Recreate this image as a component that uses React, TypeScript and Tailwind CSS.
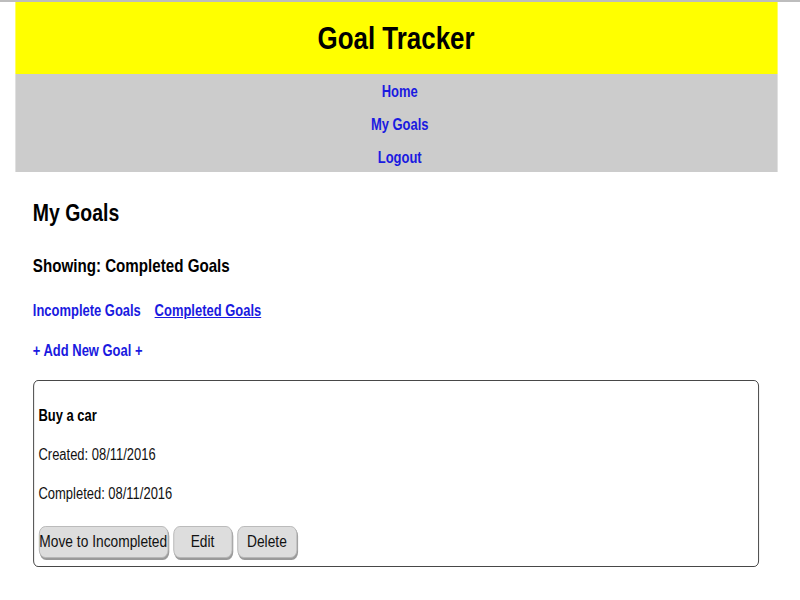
// The reference text is horizontally condensed (Arial squeezed to ~81%).
// No narrow face is installed, so the page is laid out at 988px and squeezed.
export default function App() {
  const font = { fontFamily: '"Liberation Sans", Arial, sans-serif' };
  const btn =
    "h-[32px] rounded-[8px] bg-[#dddddd] border border-[#b5b5b5] shadow-[1px_2px_0_#9a9a9a] text-[17px] text-[#111] whitespace-nowrap flex items-center justify-center";
  const link = "text-[16px] font-bold text-[#1a1ae0]";

  return (
    <div className="min-h-screen w-full overflow-hidden bg-white border-t-2 border-[#bdbdbd]" style={font}>
      <div className="w-[988px] origin-top-left scale-x-[0.81]">
        <div className="ml-[18.5px] w-[941px]">
          <header className="h-[72px] bg-[#ffff00] flex items-center justify-center">
            <h1 className="text-[32px] font-bold text-black leading-none">Goal Tracker</h1>
          </header>
          <nav className="bg-[#cccccc] pl-[9px] pt-[1px] flex flex-col items-center">
            <a className={`h-[33px] leading-[33px] ${link}`}>Home</a>
            <a className={`h-[33px] leading-[33px] ${link}`}>My Goals</a>
            <a className={`h-[31px] leading-[33px] ${link}`}>Logout</a>
          </nav>

          <main className="px-[22px]">
            <h2 className="mt-[27px] text-[24px] leading-[28px] font-bold text-black">My Goals</h2>
            <h3 className="mt-[28px] text-[18.72px] leading-[22px] font-bold text-black">Showing: Completed Goals</h3>
            <div className={`mt-[24px] flex gap-[17px] leading-[20px] ${link}`}>
              <a>Incomplete Goals</a>
              <a className="underline">Completed Goals</a>
            </div>
            <a className={`block mt-[20px] leading-[20px] ${link}`}>+ Add New Goal +</a>

            <div className="mt-[19px] w-[896px] border border-[#333] rounded-[6px] px-[6px] pt-[25px] pb-[8px]">
              <p className="text-[16px] leading-[20px] font-bold text-black">Buy a car</p>
              <p className="mt-[19px] text-[16px] leading-[20px] text-[#111]">Created: 08/11/2016</p>
              <p className="mt-[19px] text-[16px] leading-[20px] text-[#111]">Completed: 08/11/2016</p>
              <div className="mt-[22px] flex gap-[6px]">
                <button className={`${btn} w-[160px]`}>Move to Incompleted</button>
                <button className={`${btn} w-[73px]`}>Edit</button>
                <button className={`${btn} w-[74px]`}>Delete</button>
              </div>
            </div>
          </main>
        </div>
      </div>
    </div>
  );
}
